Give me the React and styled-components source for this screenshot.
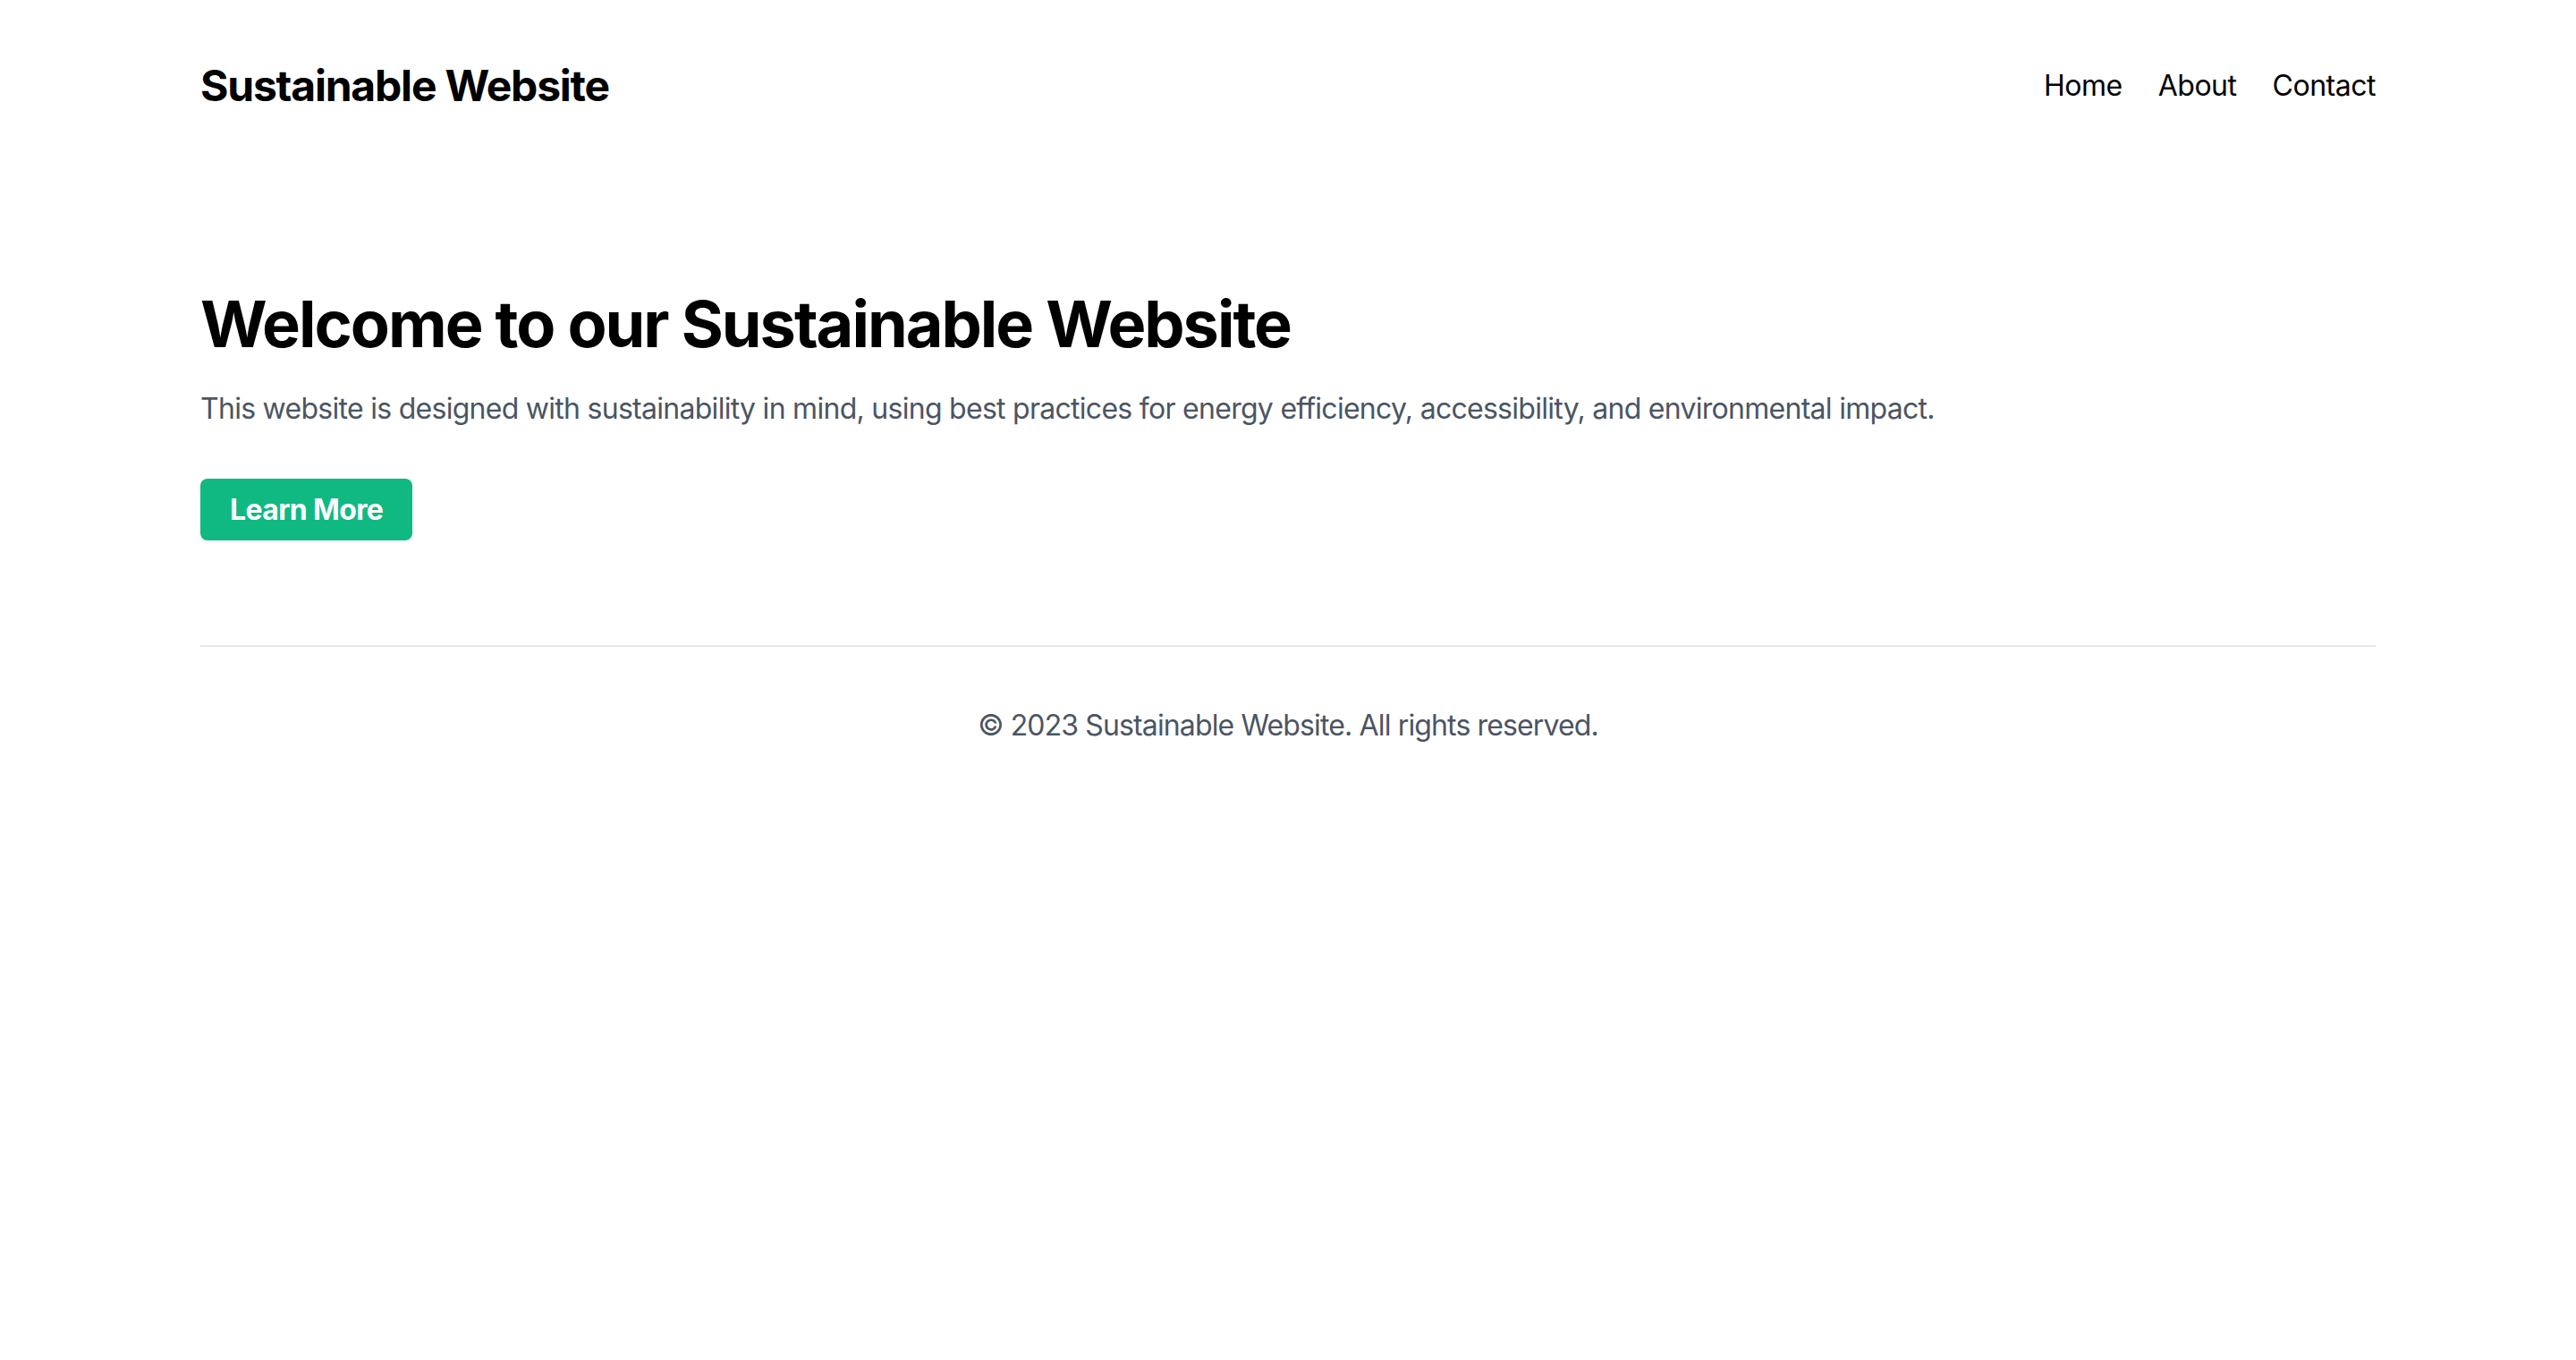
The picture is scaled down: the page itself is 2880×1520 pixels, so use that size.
import React from "react";
import styled, { createGlobalStyle } from "styled-components";

const Global = createGlobalStyle`
  html, body { margin: 0; padding: 0; background: #ffffff; }
  body { font-family: Inter, "Noto Sans", "Liberation Sans", sans-serif; color: #000; letter-spacing: -0.03em; }
  * { box-sizing: border-box; }
`;

const Page = styled.div`
  max-width: 2560px;
  margin: 0 auto;
  padding: 0 64px;
`;

const Header = styled.header`
  display: flex;
  align-items: center;
  justify-content: space-between;
  padding: 64px 0;
`;

const Logo = styled.h1`
  margin: 0;
  font-size: 48px;
  line-height: 64px;
  font-weight: 700;
  letter-spacing: -0.025em;
  color: #000;
`;

const Nav = styled.nav`
  display: flex;
  gap: 40px;
`;

const NavLink = styled.a`
  font-size: 32px;
  line-height: 48px;
  color: #000;
  text-decoration: none;
`;

const Main = styled.main`
  padding: 130px 0 117px;
`;

const Title = styled.h2`
  margin: 0 0 31px;
  font-size: 72px;
  line-height: 80px;
  font-weight: 700;
  letter-spacing: -0.028em;
  color: #000;
`;

const Lead = styled.p`
  margin: 0 0 54px;
  font-size: 32px;
  line-height: 48px;
  letter-spacing: -0.0225em;
  color: #4b5563;
`;

const Button = styled.button`
  display: inline-flex;
  align-items: center;
  height: 69px;
  padding: 0 33px;
  border: none;
  border-radius: 8px;
  background: #10b981;
  color: #fff;
  font-family: inherit;
  font-size: 32px;
  font-weight: 700;
  letter-spacing: -0.02em;
  cursor: pointer;
`;

const Footer = styled.footer`
  border-top: 2px solid #e5e7eb;
  padding: 64px 0;
  text-align: center;
`;

const FootText = styled.p`
  margin: 0;
  font-size: 32px;
  line-height: 48px;
  letter-spacing: -0.027em;
  color: #4b5563;
`;

export default function App() {
  return (
    <>
      <Global />
      <Page>
        <Header>
          <Logo>Sustainable Website</Logo>
          <Nav>
            <NavLink href="#">Home</NavLink>
            <NavLink href="#">About</NavLink>
            <NavLink href="#">Contact</NavLink>
          </Nav>
        </Header>
        <Main>
          <Title>Welcome to our Sustainable Website</Title>
          <Lead>
            This website is designed with sustainability in mind, using best practices for energy efficiency, accessibility, and environmental impact.
          </Lead>
          <Button>Learn More</Button>
        </Main>
        <Footer>
          <FootText>© 2023 Sustainable Website. All rights reserved.</FootText>
        </Footer>
      </Page>
    </>
  );
}
